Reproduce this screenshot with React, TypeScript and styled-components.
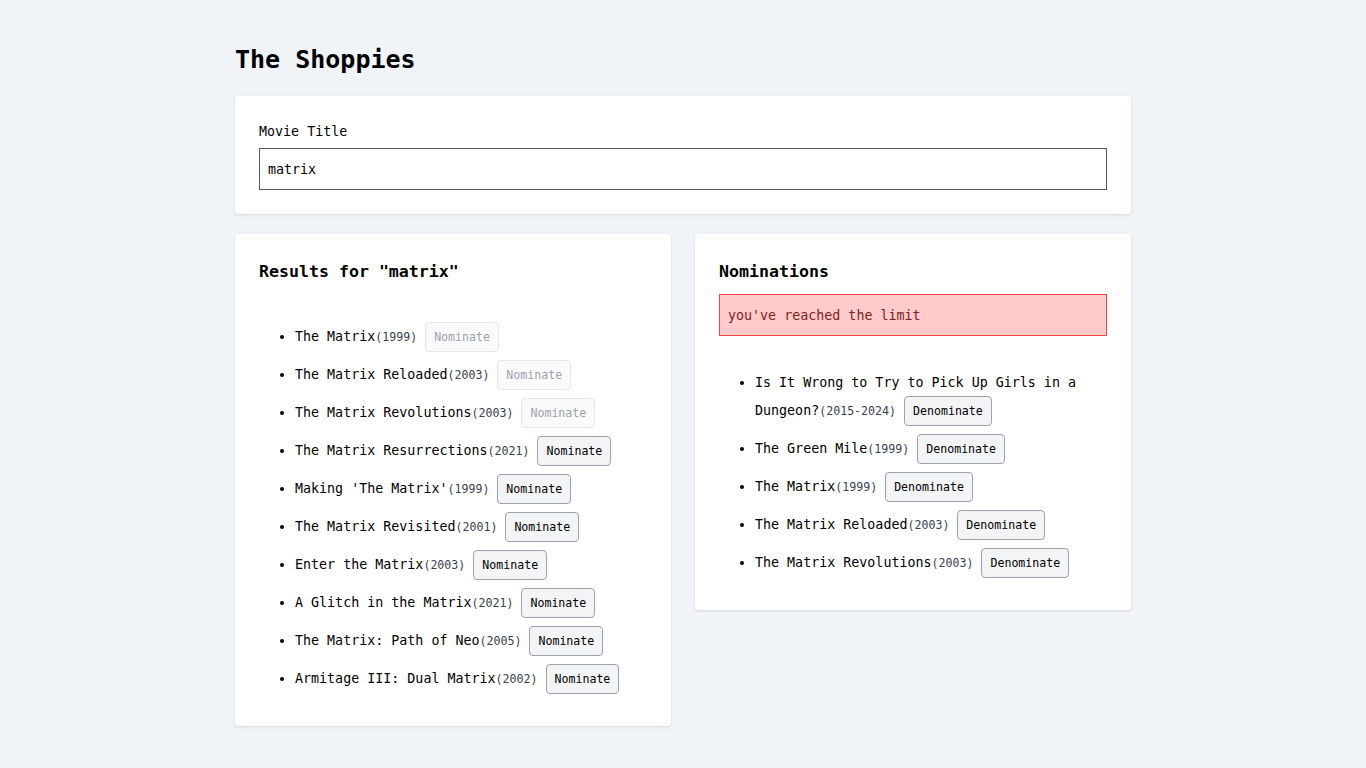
import React from "react";
import styled, { createGlobalStyle } from "styled-components";

const Global = createGlobalStyle`
  html, body { margin: 0; padding: 0; }
  body {
    background: #f0f3f8;
    font-family: "DejaVu Sans Mono", monospace;
    color: #000;
  }
`;

const Page = styled.div`
  width: 896px;
  margin: 0 auto;
  padding: 41px 0 40px;
  display: flex;
  flex-direction: column;
`;

const Title = styled.h1`
  margin: 0 0 17px;
  font-size: 25px;
  line-height: 38px;
  font-weight: 700;
`;

const Card = styled.section`
  background: #fff;
  border-radius: 4px;
  box-shadow: 0 1px 3px rgba(15, 23, 42, 0.12);
  padding: 24px;
  box-sizing: border-box;
`;

const Label = styled.label`
  display: block;
  font-size: 13.33px;
  line-height: 20px;
  margin-top: 2px;
  margin-bottom: 6px;
`;

const Input = styled.input`
  display: block;
  width: 100%;
  box-sizing: border-box;
  height: 42px;
  border: 1px solid #555;
  border-radius: 0;
  padding: 0 8px;
  font-family: "DejaVu Sans Mono", monospace;
  font-size: 13.33px;
  color: #000;
  outline: none;
`;

const Columns = styled.div`
  margin-top: 20px;
  display: grid;
  grid-template-columns: 1fr 1fr;
  gap: 24px;
  align-items: start;
`;

const Heading = styled.h2`
  margin: 3px 0 0;
  font-size: 16.6px;
  line-height: 22px;
  font-weight: 700;
`;

const Alert = styled.div`
  margin-top: 11px;
  height: 42px;
  box-sizing: border-box;
  display: flex;
  align-items: center;
  padding: 0 8px;
  background: #fecaca;
  border: 1px solid #ef4444;
  color: #7f1d1d;
  font-size: 13.33px;
`;

const List = styled.ul<{ $top: number }>`
  margin: ${(p) => p.$top}px 0 0;
  padding-left: 36px;
  font-size: 13.33px;
  line-height: 28px;
`;

const Item = styled.li`
  margin-bottom: 10px;
  &:last-child { margin-bottom: 9px; }
`;

const Year = styled.span`
  font-size: 11.6px;
  color: #374151;
  margin-right: 8px;
`;

const Button = styled.button`
  font-family: "DejaVu Sans Mono", monospace;
  font-size: 11.6px;
  line-height: 28px;
  height: 30px;
  margin: -1px 0;
  padding: 0 8px;
  border-radius: 4px;
  border: 1px solid ${(p) => (p.disabled ? "#e5e7eb" : "#9ca3af")};
  background: ${(p) => (p.disabled ? "#fafafa" : "#f3f4f6")};
  color: ${(p) => (p.disabled ? "#9ca3af" : "#000")};
  vertical-align: middle;
  cursor: pointer;
`;

const results: [string, string, boolean][] = [
  ["The Matrix", "1999", true],
  ["The Matrix Reloaded", "2003", true],
  ["The Matrix Revolutions", "2003", true],
  ["The Matrix Resurrections", "2021", false],
  ["Making 'The Matrix'", "1999", false],
  ["The Matrix Revisited", "2001", false],
  ["Enter the Matrix", "2003", false],
  ["A Glitch in the Matrix", "2021", false],
  ["The Matrix: Path of Neo", "2005", false],
  ["Armitage III: Dual Matrix", "2002", false],
];

const nominations: [string, string][] = [
  ["Is It Wrong to Try to Pick Up Girls in a Dungeon?", "2015-2024"],
  ["The Green Mile", "1999"],
  ["The Matrix", "1999"],
  ["The Matrix Reloaded", "2003"],
  ["The Matrix Revolutions", "2003"],
];

export default function App() {
  return (
    <>
      <Global />
      <Page>
        <Title>The Shoppies</Title>
        <Card>
          <Label htmlFor="title">Movie Title</Label>
          <Input id="title" defaultValue="matrix" />
        </Card>
        <Columns>
          <Card>
            <Heading>Results for "matrix"</Heading>
            <List $top={40}>
              {results.map(([t, y, d]) => (
                <Item key={t}>
                  {t}
                  <Year>({y})</Year>
                  <Button disabled={d}>Nominate</Button>
                </Item>
              ))}
            </List>
          </Card>
          <Card>
            <Heading>Nominations</Heading>
            <Alert>you've reached the limit</Alert>
            <List $top={33}>
              {nominations.map(([t, y]) => (
                <Item key={t}>
                  {t}
                  <Year>({y})</Year>
                  <Button>Denominate</Button>
                </Item>
              ))}
            </List>
          </Card>
        </Columns>
      </Page>
    </>
  );
}
